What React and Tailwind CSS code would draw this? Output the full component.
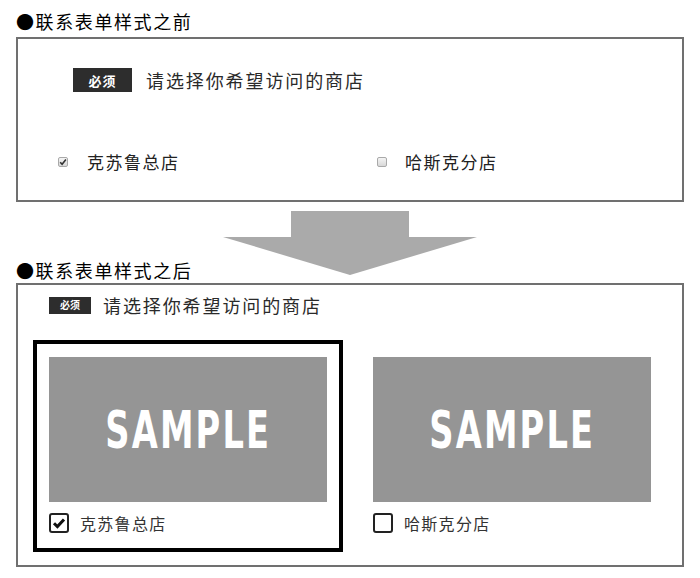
import React from 'react';

const cjk = "font-['Noto_Sans_CJK_SC','Noto_Sans',sans-serif]";

const Badge = ({ big }) => (
  <span
    className={
      big
        ? 'flex items-center justify-center w-[59px] h-[24px] bg-[#2d2d2d] text-white text-[13px] font-bold tracking-[1px] leading-none'
        : 'flex items-center justify-center w-[42px] h-[17px] bg-[#2d2d2d] text-white text-[10px] font-bold leading-none'
    }
  >
    必须
  </span>
);

const TinyBox = ({ checked }) => (
  <span className="flex items-center justify-center w-[10px] h-[10px] rounded-[2px] border border-[#a9a9a9] bg-gradient-to-b from-[#f4f4f4] to-[#d8d8d8]">
    {checked && (
      <svg width="8" height="8" viewBox="0 0 8 8">
        <path d="M1.2 4.2 L3.1 6.2 L6.9 1.4" fill="none" stroke="#333" strokeWidth="1.6" />
      </svg>
    )}
  </span>
);

const StoreCard = ({ label, selected }) => (
  <div className={`border-4 ${selected ? 'border-black' : 'border-transparent'} px-[12px] pt-[13px] pb-[15px]`}>
    <div className="w-[278px] h-[145px] bg-[#959595] flex items-center justify-center">
      <span className="text-white font-['Liberation_Sans_Narrow','DejaVu_Sans_Condensed',sans-serif] font-bold text-[52px] tracking-[3px] leading-none scale-x-[0.72]">
        SAMPLE
      </span>
    </div>
    <div className="flex items-center mt-[11px]">
      <span className="flex items-center justify-center w-[20px] h-[20px] rounded-[3px] border-2 border-[#222] bg-white">
        {selected && (
          <svg width="14" height="14" viewBox="0 0 14 14">
            <path d="M2 7.2 L5.4 10.6 L12 3.4" fill="none" stroke="#111" strokeWidth="3" />
          </svg>
        )}
      </span>
      <span className="ml-[11px] text-[16px] tracking-[1.3px] text-[#333] leading-[20px]">{label}</span>
    </div>
  </div>
);

export default function App() {
  return (
    <div className={`w-[700px] h-[578px] bg-white px-4 text-[#222] ${cjk}`}>
      <h2 className="pt-[9px] mb-[4px] text-[18px] leading-[24px] tracking-[1.6px] text-black">●联系表单样式之前</h2>

      {/* before */}
      <div className="border-2 border-[#707070] pt-[29px] pb-[26px]">
        <div className="flex items-center pl-[55px]">
          <Badge big />
          <span className="ml-[14px] text-[18px] leading-[24px] tracking-[1.9px] text-[#2a2a2a]">请选择你希望访问的商店</span>
        </div>
        <div className="flex items-center pl-[40px] mt-[58px] h-[24px]">
          <div className="flex items-center w-[319px]">
            <TinyBox checked />
            <span className="ml-[19px] text-[17px] tracking-[1.5px] leading-[24px]">克苏鲁总店</span>
          </div>
          <div className="flex items-center">
            <TinyBox />
            <span className="ml-[18px] text-[17px] tracking-[1.5px] leading-[24px]">哈斯克分店</span>
          </div>
        </div>
      </div>

      {/* arrow + heading */}
      <div className="grid h-[81px]">
        <svg className="col-start-1 row-start-1 justify-self-center self-start mt-[9px]" width="254" height="64" viewBox="0 0 254 64">
          <rect x="68" y="0" width="118" height="27" fill="#aaaaaa" />
          <polygon points="0,26 254,26 127,64" fill="#aaaaaa" />
        </svg>
        <h2 className="col-start-1 row-start-1 self-end mb-[1px] text-[18px] leading-[24px] tracking-[1.6px] text-black">●联系表单样式之后</h2>
      </div>

      {/* after */}
      <div className="border-2 border-[#707070] pt-[8px] pb-[13px]">
        <div className="flex items-center pl-[31px] h-[24px]">
          <Badge />
          <span className="ml-[12px] text-[18px] leading-[24px] tracking-[1.9px] text-[#2a2a2a]">请选择你希望访问的商店</span>
        </div>
        <div className="flex gap-[14px] pl-[15px] mt-[23px]">
          <StoreCard label="克苏鲁总店" selected />
          <StoreCard label="哈斯克分店" />
        </div>
      </div>
    </div>
  );
}
